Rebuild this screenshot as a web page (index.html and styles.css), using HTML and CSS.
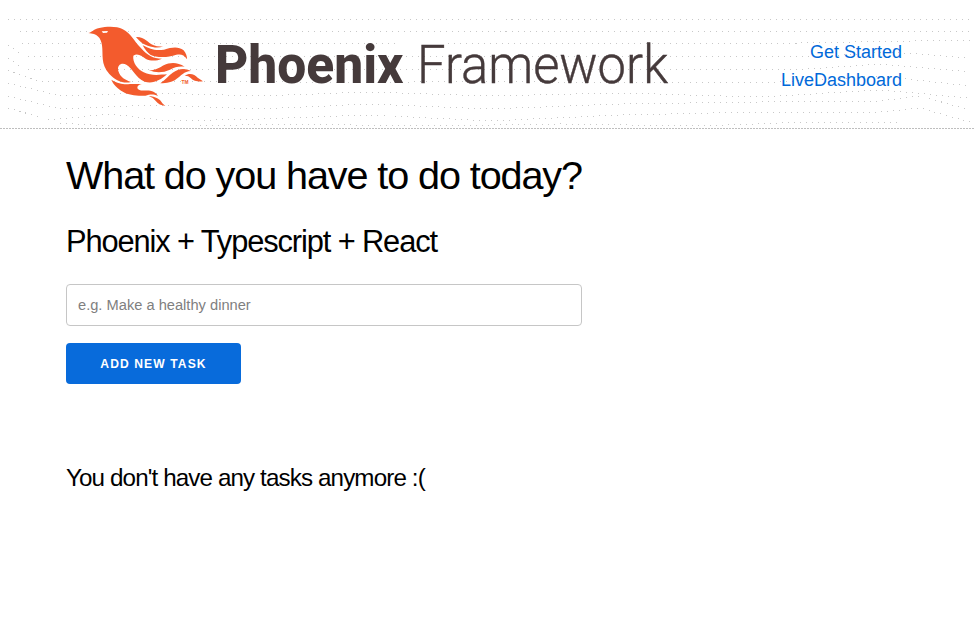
FILE: index.html
```html
<!DOCTYPE html>
<html lang="en">
<head>
<meta charset="utf-8">
<title>Phoenix Framework</title>
<link rel="stylesheet" href="styles.css">
</head>
<body>
<header class="header">
  <svg class="texture" viewBox="0 0 977 129" aria-hidden="true">
    <path d="M7.500 19.500H972M19.500 31.500H972M21.500 43.500H768L972 40"/>
    <path d="M8 45L24 56.500H820L890 52L970 58M8 58L24 69.500H800L880 64L970 72"/>
    <path d="M8 70L40 82L230 81L340 83L480 81L620 83L780 82L880 76L970 86M8 83L60 96L150 93L260 96L370 92L490 96L620 93L760 97L880 90L970 98"/>
    <path d="M8 96L60 109L150 105L260 109L370 104L490 109L620 104L760 102L880 101L920 96L970 110M8 108L50 120L110 114L170 121L260 119L370 115L490 121L620 115L760 112L880 112L920 108L970 122M60 123L110 126M200 126L280 124L420 126L560 124L700 126L810 122L900 122"/>
  </svg>
  <div class="container header-row">
    <svg class="logo" viewBox="0 0 590 100" role="img" aria-label="Phoenix Framework">
      <g class="bird" transform="scale(.33333)">
        <path d="M25 54C35 53 39 43 58 39C81 34 112 34 127 42C153 54 162 79 182 98C203 121 218 130 246 131C231 138 212 139 198 132C187 124 173 113 160 122C157 142 173 163 191 172C214 184 241 179 261 178C241 196 219 207 194 200C167 189 157 158 139 149C125 142 110 150 115 168C121 188 136 194 153 201C130 207 105 196 88 177C61 147 70 119 66 91C63 67 51 56 25 54Z"/>
        <path d="M168 66C195 65 202 83 221 91Q234 96 250 94Q235 100 218 96C198 94 179 81 168 66Z"/>
        <path d="M188 91C212 102 222 108 252 104C278 95 297 95 310 105C318 113 322 125 321 133C309 114 296 117 279 122C257 128 225 127 211 119Q198 110 188 91Z"/>
        <path d="M207 166C225 167 240 158 251 151C272 141 293 142 314 155C294 153 285 157 270 164Q239 178 207 166Z"/>
        <path d="M241 205C257 193 266 182 278 173C295 160 315 158 333 168C311 169 304 182 289 192C277 202 261 204 241 205Z"/>
        <path d="M314 182C329 172 344 178 353 188L369 199C354 201 342 199 332 189Q324 181 314 182Z"/>
        <path d="M94 194C117 207 132 209 150 207L186 207C174 208 167 219 177 224C187 229 198 225 211 227Q228 231 234 243C218 236 211 238 196 242C173 244 145 240 130 231C111 220 100 208 94 194Z"/>
        <path d="M206 243C227 245 240 251 247 265L256 273Q237 271 228 259Q220 247 206 243Z"/>
        <path class="eye" d="M65 49L84 48L81 53L69 54Z"/>
      </g>
      <text class="tm" x="101.500" y="68.500" textLength="7" lengthAdjust="spacingAndGlyphs">TM</text>
      <text class="word strong" x="135" y="67.700" textLength="188.500" lengthAdjust="spacingAndGlyphs">Phoenix</text>
      <text class="word light" x="337" y="67.700" textLength="251" lengthAdjust="spacingAndGlyphs">Framework</text>
    </svg>
    <nav class="nav">
      <a href="#">Get Started</a>
      <a href="#">LiveDashboard</a>
    </nav>
  </div>
</header>
<main class="container">
  <h1>What do you have to do today?</h1>
  <h2>Phoenix + Typescript + React</h2>
  <form class="task-form">
    <input type="text" placeholder="e.g. Make a healthy dinner">
    <button type="button">Add new task</button>
  </form>
  <h3>You don't have any tasks anymore :(</h3>
</main>
</body>
</html>
```
FILE: styles.css
```css
* { box-sizing: border-box; }
body {
  margin: 0;
  background: #fff;
  color: #000;
  font-family: "Liberation Sans", Arial, sans-serif;
}
.header {
  position: relative;
  height: 129px;
  background: repeating-linear-gradient(90deg, #bebebe 0 2px, #fff 2px 3px) left bottom / 974px 1px no-repeat;
}
.texture {
  position: absolute;
  top: 0;
  left: 0;
  width: 977px;
  height: 129px;
  fill: none;
  stroke: #c8c8c8;
  stroke-width: 1;
  stroke-dasharray: 1 5;
  shape-rendering: crispEdges;
}
.container { padding: 0 66px; }
.header-row {
  position: relative;
  display: flex;
  justify-content: space-between;
  align-items: flex-start;
  padding: 15px 75px 0 80px;
}
.logo {
  width: 590px;
  height: 100px;
  overflow: visible;
}
.bird { fill: #f35b2d; }
.eye { fill: #fff; }
.tm {
  fill: #f35b2d;
  font: bold 5px "Liberation Sans", sans-serif;
}
.word {
  fill: #453a3b;
  font-family: Roboto, sans-serif;
  font-size: 53.5px;
}
.strong { font-weight: 800; }
.light {
  font-weight: 300;
  stroke: #453a3b;
  stroke-width: .4;
}
.nav {
  display: flex;
  flex-direction: column;
  align-items: flex-end;
  padding-top: 23px;
  font-size: 18px;
  line-height: 28px;
}
.nav a {
  color: #0069d9;
  text-decoration: none;
}
h1, h2, h3 {
  margin: 0;
  font-weight: 400;
  letter-spacing: -1.1px;
}
h1 {
  padding-top: 22px;
  font-size: 39.6px;
  line-height: 48px;
}
h2 {
  margin-top: 23px;
  font-size: 30.8px;
  line-height: 40px;
}
.task-form {
  display: flex;
  flex-direction: column;
  align-items: flex-start;
  gap: 17px;
  margin-top: 22px;
}
input {
  width: 516px;
  height: 42px;
  padding: 0 11px;
  border: 1px solid #c6c6c6;
  border-radius: 4px;
  font: 14.67px "Liberation Sans", Arial, sans-serif;
}
input::placeholder { color: #808080; }
button {
  width: 175px;
  height: 41px;
  padding: 0;
  border: 0;
  border-radius: 4px;
  background: #086bdb;
  color: #fff;
  font: bold 12.1px "Liberation Sans", Arial, sans-serif;
  letter-spacing: 1.1px;
  text-transform: uppercase;
}
h3 {
  margin-top: 78px;
  font-size: 24.2px;
  letter-spacing: -.88px;
  line-height: 32px;
}
```
